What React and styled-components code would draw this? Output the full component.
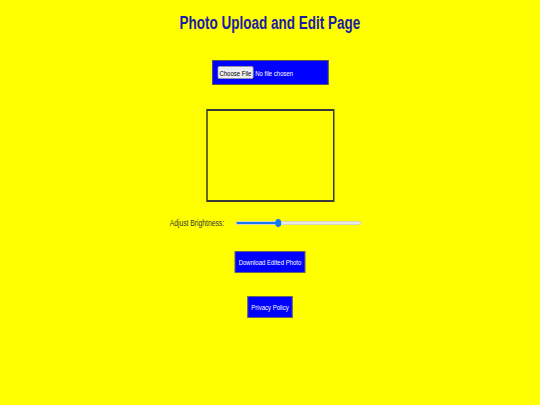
import React, { useState } from "react";
import styled, { createGlobalStyle } from "styled-components";

const GlobalStyle = createGlobalStyle`
  html, body {
    margin: 0;
    background-color: #ffff00;
    overflow: hidden;
  }
  body {
    font-family: "Liberation Sans", Arial, sans-serif;
  }
`;

// the shot is squeezed sideways, so the page is laid out wide and narrowed
const Viewport = styled.div`
  width: 540px;
  height: 405px;
  overflow: hidden;
`;

const Page = styled.div`
  width: 720px;
  min-height: 405px;
  display: flex;
  flex-direction: column;
  align-items: center;
  box-sizing: border-box;
  padding-top: 12px;
  transform: scaleX(0.75);
  transform-origin: 0 0;
`;

const Title = styled.h1`
  margin: 0;
  font-size: 18px;
  font-weight: bold;
  color: #1c1ca6;
  line-height: 22px;
`;

const UploadBox = styled.div`
  margin-top: 26px;
  width: 155px;
  height: 25px;
  box-sizing: border-box;
  display: flex;
  align-items: center;
  padding: 0 6px;
  background-color: #0000ff;
  border: 1px solid #555;
`;

const FileInput = styled.input`
  font-family: inherit;
  font-size: 8px;
  color: #fff;
  width: 100%;
  &::file-selector-button {
    font-family: inherit;
    font-size: 8px;
    padding: 2px 2px;
    height: 13px;
    margin-right: 2px;
    border: 1px solid #999;
    border-radius: 2px;
    background: #efefef;
    color: #000;
  }
`;

const Canvas = styled.div`
  margin-top: 24px;
  width: 171px;
  height: 93px;
  box-sizing: border-box;
  border: 2px solid #3a3a3a;
`;

const SliderRow = styled.div`
  margin-top: 16px;
  display: flex;
  align-items: center;
  gap: 15px;
  padding-right: 12px;
`;

const Label = styled.label`
  font-size: 9px;
  color: #333;
`;

const Range = styled.input`
  -webkit-appearance: none;
  appearance: none;
  width: 168px;
  height: 9px;
  margin: 0;
  background: transparent;
  &::-webkit-slider-runnable-track {
    height: 4px;
    border-radius: 2px;
    background: linear-gradient(to right, #1479ef 0%, #1479ef ${({ pct }) => pct}%, #e8e8e8 ${({ pct }) => pct}%, #e8e8e8 100%);
    border: 1px solid #d0d0d0;
    box-sizing: border-box;
  }
  &::-webkit-slider-thumb {
    -webkit-appearance: none;
    width: 8px;
    height: 8px;
    border-radius: 50%;
    background: #1479ef;
    margin-top: -3px;
  }
`;

const BlueButton = styled.button`
  margin-top: ${({ mt }) => mt}px;
  height: 22px;
  padding: 0 ${({ px }) => px}px;
  background-color: #0000ff;
  color: #fff;
  border: 1px solid #666;
  font-family: inherit;
  font-size: 8px;
  cursor: pointer;
`;

const App = () => {
  const [brightness, setBrightness] = useState(100);
  const pct = (brightness / 300) * 100;

  return (
    <>
      <GlobalStyle />
      <Viewport>
        <Page>
          <Title>Photo Upload and Edit Page</Title>
          <UploadBox>
            <FileInput type="file" accept="image/*" />
          </UploadBox>
          <Canvas />
          <SliderRow>
            <Label htmlFor="brightness">Adjust Brightness:</Label>
            <Range
              id="brightness"
              type="range"
              min="0"
              max="300"
              value={brightness}
              pct={pct}
              onChange={e => setBrightness(Number(e.target.value))}
            />
          </SliderRow>
          <BlueButton mt={23} px={4}>Download Edited Photo</BlueButton>
          <BlueButton mt={23} px={4}>Privacy Policy</BlueButton>
        </Page>
      </Viewport>
    </>
  );
};

export default App;
